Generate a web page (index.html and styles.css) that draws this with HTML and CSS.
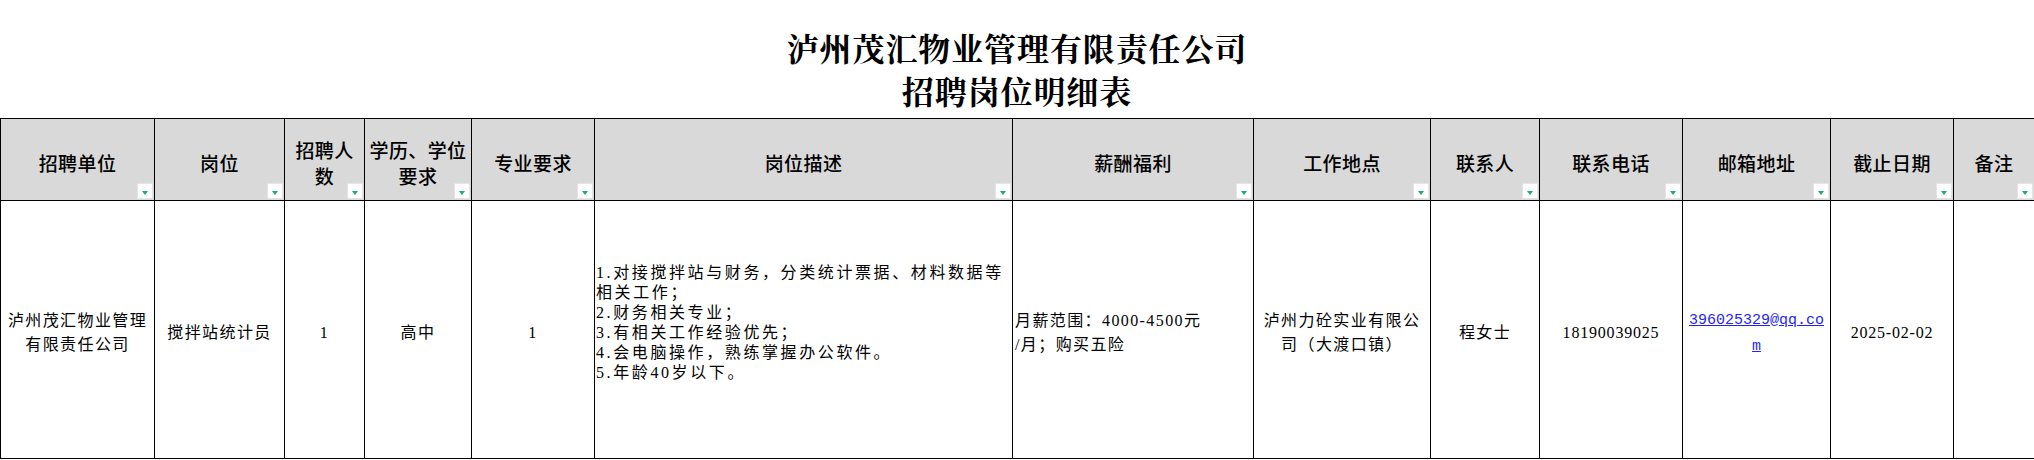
FILE: index.html
```html
<!DOCTYPE html>
<html lang="zh-CN">
<head>
<meta charset="utf-8">
<title>招聘岗位明细表</title>
<link rel="stylesheet" href="styles.css">
</head>
<body>
<div class="title">
  <div>泸州茂汇物业管理有限责任公司</div>
  <div>招聘岗位明细表</div>
</div>
<table class="sheet">
  <colgroup>
    <col class="c-unit"><col class="c-post"><col class="c-count"><col class="c-edu"><col class="c-major"><col class="c-desc"><col class="c-pay"><col class="c-loc"><col class="c-contact"><col class="c-phone"><col class="c-mail"><col class="c-date"><col class="c-note">
  </colgroup>
  <thead>
    <tr>
      <th>招聘单位<span class="dd"></span></th>
      <th>岗位<span class="dd"></span></th>
      <th>招聘人<br>数<span class="dd"></span></th>
      <th>学历、学位<br>要求<span class="dd"></span></th>
      <th>专业要求<span class="dd"></span></th>
      <th>岗位描述<span class="dd"></span></th>
      <th>薪酬福利<span class="dd"></span></th>
      <th>工作地点<span class="dd"></span></th>
      <th>联系人<span class="dd"></span></th>
      <th>联系电话<span class="dd"></span></th>
      <th>邮箱地址<span class="dd"></span></th>
      <th>截止日期<span class="dd"></span></th>
      <th>备注<span class="dd"></span></th>
    </tr>
  </thead>
  <tbody>
    <tr>
      <td>泸州茂汇物业管理有限责任公司</td>
      <td>搅拌站统计员</td>
      <td>1</td>
      <td>高中</td>
      <td>1</td>
      <td class="desc">1.对接搅拌站与财务，分类统计票据、材料数据等相关工作；<br>2.财务相关专业；<br>3.有相关工作经验优先；<br>4.会电脑操作，熟练掌握办公软件。<br>5.年龄40岁以下。</td>
      <td class="pay">月薪范围：4000-4500元<br>/月；购买五险</td>
      <td>泸州力砼实业有限公司（大渡口镇）</td>
      <td>程女士</td>
      <td class="num">18190039025</td>
      <td class="mail"><a href="mailto:396025329@qq.com">396025329@qq.com</a></td>
      <td class="num">2025-02-02</td>
      <td></td>
    </tr>
  </tbody>
</table>
</body>
</html>
```

FILE: styles.css
```css
* { box-sizing: border-box; }

body {
  margin: 0;
  background: #fff;
  color: #000;
}

.title {
  height: 118px;
  padding-top: 26px;
  text-align: center;
  font-family: "Noto Serif CJK SC", "Noto Sans CJK SC", sans-serif;
  font-weight: 700;
  font-size: 32px;
  line-height: 43px;
  letter-spacing: 0.9px;
}

.sheet {
  border-collapse: collapse;
  table-layout: fixed;
  width: 2034px;
}

.c-unit { width: 154px; }
.c-post { width: 130px; }
.c-count { width: 80px; }
.c-edu { width: 107px; }
.c-major { width: 123px; }
.c-desc { width: 418px; }
.c-pay { width: 241px; }
.c-loc { width: 177px; }
.c-contact { width: 109px; }
.c-phone { width: 143px; }
.c-mail { width: 148px; }
.c-date { width: 123px; }
.c-note { width: 81px; }

.sheet th,
.sheet td {
  border: 1px solid #000;
  padding: 0 3px;
  vertical-align: middle;
  text-align: center;
}

.sheet th {
  position: relative;
  height: 82px;
  padding-top: 6px;
  background: #d9d9d9;
  font-family: "Noto Sans CJK SC", sans-serif;
  font-weight: 500;
  font-size: 19px;
  line-height: 26px;
  letter-spacing: 0.4px;
}

.sheet td {
  height: 258px;
  padding-top: 6px;
  font-family: "Liberation Serif", "Noto Sans CJK SC", serif;
  font-size: 16px;
  line-height: 23.5px;
  letter-spacing: 1.4px;
}

.sheet td.desc {
  text-align: left;
  line-height: 20px;
  letter-spacing: 2.6px;
  padding: 6px 1px 20px 1px;
}

.sheet td.pay {
  text-align: left;
  padding-left: 2px;
}

.sheet td.num {
  letter-spacing: 0.8px;
}

.sheet td.mail {
  line-height: 24px;
}

.mail a {
  color: #1f1fff;
  text-decoration: underline;
  font-family: "Liberation Mono", monospace;
  font-size: 15px;
  letter-spacing: 0;
  word-break: break-all;
}

.dd {
  position: absolute;
  right: 1px;
  bottom: 1px;
  width: 16px;
  height: 16px;
  background: #fff;
  border: 1px solid #e4e4e4;
  display: flex;
  align-items: center;
  justify-content: center;
  padding-top: 3px;
}

.dd::after {
  content: "";
  width: 0;
  height: 0;
  border-left: 3.5px solid transparent;
  border-right: 3.5px solid transparent;
  border-top: 4px solid #1aae66;
}
```
